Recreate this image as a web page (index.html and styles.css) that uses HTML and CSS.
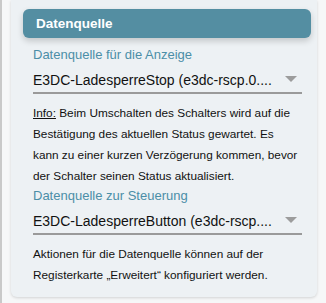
FILE: index.html
```html
<!doctype html>
<html>
  <head>
    <meta charset="utf-8">
    <title>Datenquelle</title>
    <link rel="stylesheet" href="styles.css">
  </head>
  <body>
    <div class="frame">
      <div class="panel">
        <div class="panel-head">Datenquelle</div>
        <div class="panel-body">
          <div class="label">Datenquelle für die Anzeige</div>
          <div class="select">
            <span class="select-text">E3DC-LadesperreStop (e3dc-rscp.0....</span>
            <span class="arrow"></span>
          </div>
          <p class="note"><span class="info">Info:</span> Beim Umschalten des Schalters wird auf die Bestätigung des aktuellen Status gewartet. Es kann zu einer kurzen Verzögerung kommen, bevor der Schalter seinen Status aktualisiert.</p>
          <div class="label">Datenquelle zur Steuerung</div>
          <div class="select">
            <span class="select-text">E3DC-LadesperreButton (e3dc-rscp....</span>
            <span class="arrow"></span>
          </div>
          <p class="note">Aktionen für die Datenquelle können auf der Registerkarte „Erweitert“ konfiguriert werden.</p>
        </div>
      </div>
    </div>
  </body>
</html>
```

FILE: styles.css
```css
html,
body {
  margin: 0;
  padding: 0;
  background: #f6f7f8;
}
body {
  font-family: "Liberation Sans", Arial, sans-serif;
}
.frame {
  border-left: 2px solid #c9c9c9;
  padding: 0 9px 6px 9px;
  height: 303px;
  box-sizing: border-box;
}
.panel {
  background: #edf1f4;
  border-radius: 0 0 6px 6px;
  box-shadow: 0 1px 3px rgba(0, 0, 0, 0.15);
  padding: 9px 6px 10px 12px;
  height: 297px;
  box-sizing: border-box;
}
.panel-head {
  background: #548ea2;
  color: #fff;
  font-weight: bold;
  font-size: 13.5px;
  height: 29px;
  line-height: 29px;
  padding-left: 13px;
  border-radius: 6px;
  box-shadow: 0 3px 6px rgba(0, 0, 0, 0.18);
}
.panel-body {
  padding: 9px 9px 0 10px;
}
.label {
  color: #4b8ea7;
  font-size: 13px;
  line-height: 15px;
}
.select {
  display: flex;
  align-items: flex-end;
  height: 26px;
  padding-bottom: 4px;
  border-bottom: 2px solid #9a9a9a;
}
.select-text {
  flex: 1;
  font-size: 14px;
  line-height: 16px;
  color: #111;
  white-space: nowrap;
  overflow: hidden;
}
.arrow {
  width: 0;
  height: 0;
  border-left: 6px solid transparent;
  border-right: 6px solid transparent;
  border-top: 6px solid #9c9c9c;
  margin: 0 5px 6px 0;
}
.note {
  margin: 9px 0 1px 0;
  font-size: 11.8px;
  line-height: 21px;
  color: #111;
}
.info {
  text-decoration: underline;
}
```
